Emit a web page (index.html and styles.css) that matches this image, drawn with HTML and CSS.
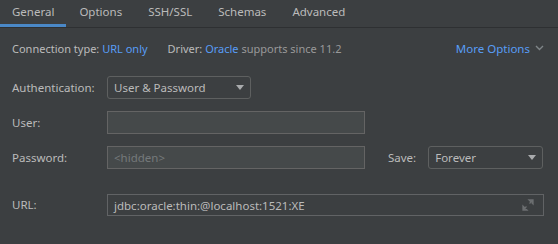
FILE: index.html
```html
<!DOCTYPE html>
<html lang="en">

<head>
  <meta charset="UTF-8" />
  <title>Connection settings</title>
  <link rel="stylesheet" href="styles.css">
</head>

<body>
  <div class="tabs">
    <div class="tab active">General</div>
    <div class="tab">Options</div>
    <div class="tab">SSH/SSL</div>
    <div class="tab">Schemas</div>
    <div class="tab">Advanced</div>
  </div>

  <div class="info">
    <span>Connection type: <span class="link">URL only</span></span>
    <span class="driver">Driver: <span class="link">Oracle</span> <span class="muted">supports since 11.2</span></span>
    <span class="more link">More Options
      <svg width="9" height="6" viewBox="0 0 9 6"><path d="M1 1l3.5 3.5L8 1" fill="none" stroke="#7f8588" stroke-width="1.4"/></svg>
    </span>
  </div>

  <div class="form">
    <div class="row">
      <label>Authentication:</label>
      <div class="combo combo-auth">User &amp; Password<span class="arrow"></span></div>
    </div>
    <div class="row">
      <label>User:</label>
      <div class="field field-short"></div>
    </div>
    <div class="row">
      <label>Password:</label>
      <div class="field field-short placeholder">&lt;hidden&gt;</div>
      <label class="save-label">Save:</label>
      <div class="combo combo-save">Forever<span class="arrow"></span></div>
    </div>
    <div class="row row-url">
      <label>URL:</label>
      <div class="field field-url">jdbc:oracle:thin:@localhost:1521:XE
        <svg class="expand" width="12" height="12" viewBox="0 0 12 12">
          <path d="M7 1h4v4z M11 1L7.5 4.5 M1 11V7l4 4z M1 11l3.5-3.5" fill="#6b6e70" stroke="#6b6e70" stroke-width="1.3"/>
        </svg>
      </div>
    </div>
  </div>
</body>

</html>
```

FILE: styles.css
```css
* {
  box-sizing: border-box;
}

html,
body {
  margin: 0;
  padding: 0;
  background-color: #3c3f41;
  color: #bbbbbb;
  font-family: 'Noto Sans', 'Open Sans', sans-serif;
  font-size: 11.5px;
}

.tabs {
  display: flex;
  height: 28px;
  border-bottom: 1px solid #2e3032;
  font-size: 11.5px;
}

.tab {
  padding: 0 13px;
  line-height: 24px;
  border-bottom: 3px solid transparent;
}

.tab.active {
  padding: 0 12px;
  border-bottom-color: #4a88c7;
}

.info {
  display: flex;
  align-items: center;
  height: 40px;
  padding: 0 14px 0 12px;
  font-size: 11px;
}

.driver {
  margin-left: 20px;
}

.link {
  color: #589df6;
}

.muted {
  color: #999999;
}

.more {
  margin-left: auto;
  font-size: 11.5px;
  display: flex;
  align-items: center;
  gap: 5px;
}

.form {
  padding: 8px 0 0 12px;
}

.row {
  display: flex;
  align-items: center;
  height: 23px;
  margin-bottom: 12px;
}

.row-url {
  margin-top: 24px;
}

label {
  width: 95px;
}

.combo {
  position: relative;
  height: 23px;
  line-height: 21px;
  padding-left: 6px;
  border: 1px solid #5e6060;
  border-radius: 3px;
}

.combo-auth {
  width: 144px;
}

.combo-save {
  width: 115px;
}

.arrow {
  position: absolute;
  right: 6px;
  top: 8px;
  border-left: 4px solid transparent;
  border-right: 4px solid transparent;
  border-top: 5px solid #a9abad;
}

.field {
  height: 23px;
  line-height: 21px;
  padding-left: 6px;
  border: 1px solid #646464;
  background-color: #45494a;
}

.field-short {
  width: 258px;
}

.placeholder {
  color: #75797b;
}

.save-label {
  width: auto;
  margin: 0 12px 0 23px;
}

.field-url {
  position: relative;
  width: 437px;
  height: 22px;
  background-color: #3c3f41;
  border-color: #616365;
}

.expand {
  position: absolute;
  right: 9px;
  top: 4px;
}
```
